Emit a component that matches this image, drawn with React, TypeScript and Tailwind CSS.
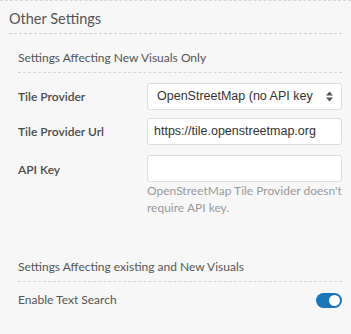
import React from "react";

export default function App() {
  const sans = { fontFamily: "Lato, 'Noto Sans', sans-serif" };
  const arial = { fontFamily: "'Liberation Sans', Arial, sans-serif" };
  return (
    <div className="w-[351px] h-[334px] bg-[#f7f7f7] border-t border-dashed border-[#d6d6d6] overflow-hidden text-[#555]" style={sans}>
      <div className="px-[9px] pt-[7px]">
        <div className="text-[14.5px] leading-[22px] pb-[3px] border-b border-dashed border-[#cfcfcf]">Other Settings</div>
      </div>
      <div className="pl-[18px] pr-[9px]">
        <div className="mt-[15px] text-[12px] leading-[18px] pb-[5px] border-b border-dashed border-[#d6d6d6]">Settings Affecting New Visuals Only</div>
        <div className="mt-[10px] flex items-center h-[27px]">
          <div className="w-[129px] text-[12px] font-semibold text-[#4a4a4a]">Tile Provider</div>
          <div className="flex-1 h-[27px] bg-white border border-[#ddd] rounded-[3px] flex items-center pl-[9px] pr-[8px] text-[12.5px] text-[#333]" style={arial}>
            <span className="flex-1 whitespace-nowrap overflow-hidden">OpenStreetMap (no API key</span>
            <svg width="7" height="11" viewBox="0 0 7 11"><path d="M3.5 0.5 L7 4.5 H0 Z M3.5 10.5 L7 6.5 H0 Z" fill="#555" /></svg>
          </div>
        </div>
        <div className="mt-[8px] flex items-center h-[27px]">
          <div className="w-[129px] text-[12px] font-semibold text-[#4a4a4a]">Tile Provider Url</div>
          <div className="flex-1 h-[27px] bg-white border border-[#ddd] rounded-[3px] flex items-center pl-[6px] text-[12.5px] text-[#333] whitespace-nowrap overflow-hidden" style={arial}>https://tile.openstreetmap.org</div>
        </div>
        <div className="mt-[10px] flex">
          <div className="w-[129px] text-[12px] font-semibold text-[#4a4a4a] pt-[6px]">API Key</div>
          <div className="flex-1">
            <div className="h-[27px] bg-white border border-[#ddd] rounded-[3px]" />
            <div className="mt-0 text-[12px] leading-[17px] text-[#9a9a9a]">OpenStreetMap Tile Provider doesn't require API key.</div>
          </div>
        </div>
        <div className="mt-[42px] text-[12px] leading-[18px] pb-[5px] border-b border-dashed border-[#d6d6d6]">Settings Affecting existing and New Visuals</div>
        <div className="mt-[8px] flex items-center justify-between h-[20px]">
          <div className="text-[12px]">Enable Text Search</div>
          <div className="w-[26px] h-[15px] rounded-full bg-[#1b75bb] flex items-center justify-end pr-[2px]">
            <div className="w-[11px] h-[11px] rounded-full bg-white" />
          </div>
        </div>
      </div>
    </div>
  );
}
